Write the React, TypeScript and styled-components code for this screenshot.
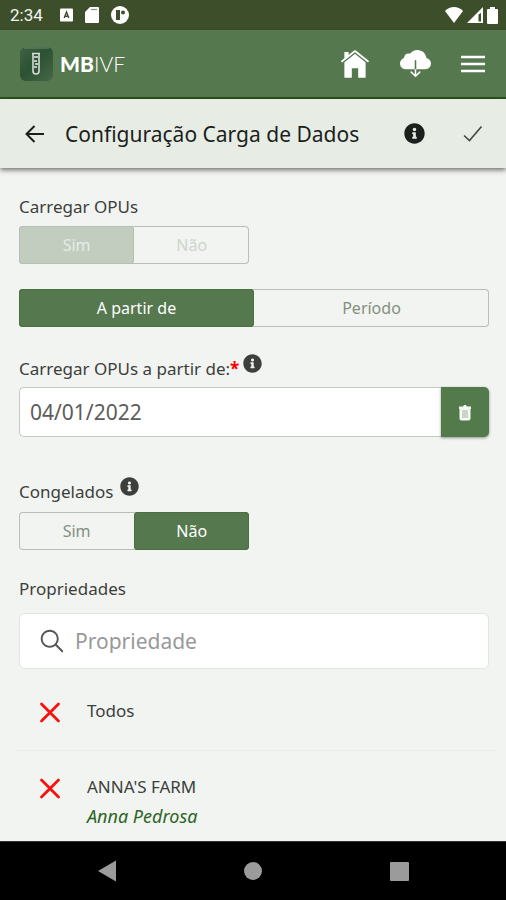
import React, { useState } from "react";
import styled, { createGlobalStyle, css } from "styled-components";
import { IoIosHome, IoIosCloudDownload, IoIosSearch } from "react-icons/io";
import { FaInfoCircle } from "react-icons/fa";

const colors = {
  green: "#55784f",
  greenDark: "#2c5416",
  status: "#3d4f2a",
  bar: "#e7ede4",
  page: "#f2f4f1",
  border: "#b9beb8",
  text: "#3c3f3c",
};

const GlobalStyle = createGlobalStyle`
  *, *::before, *::after { box-sizing: border-box; }
  body {
    margin: 0;
    background: ${colors.page};
    color: ${colors.text};
    font-family: "Noto Sans", "Open Sans", sans-serif;
    font-size: 17px;
    line-height: 24px;
  }
  button, input { font: inherit; color: inherit; }
  button { margin: 0; padding: 0; border: 0; background: none; cursor: pointer; }
  svg { display: block; flex: none; }
`;

const Screen = styled.div`
  display: flex;
  flex-direction: column;
  height: 100vh;
`;

const StatusBar = styled.div`
  display: flex;
  align-items: center;
  flex: none;
  height: 30px;
  padding: 0 8px 0 10px;
  background: ${colors.status};
  color: #f4f6f2;
  font-family: Roboto, sans-serif;
  font-size: 17px;
`;

const StatusIcons = styled.div<{ $end?: boolean }>`
  display: flex;
  align-items: center;
  gap: ${(p) => (p.$end ? 4 : 12)}px;
  margin-left: ${(p) => (p.$end ? "auto" : "17px")};
`;

const Header = styled.header`
  display: flex;
  align-items: center;
  flex: none;
  height: 69px;
  padding: 0 19px 0 20px;
  background: ${colors.green};
  border-bottom: 2px solid ${colors.greenDark};
  color: #fff;
`;

const Brand = styled.div`
  display: flex;
  align-items: center;
  gap: 7px;
  font-family: Lato, sans-serif;
  font-size: 21px;
  font-weight: 300;

  strong { font-weight: 900; }
`;

const HeaderActions = styled.div`
  display: flex;
  align-items: center;
  gap: 28px;
  margin-left: auto;
`;

const IconButton = styled.button`
  display: grid;
  place-items: center;
`;

const TitleBar = styled.div`
  display: flex;
  align-items: center;
  flex: none;
  height: 69px;
  padding: 0 23px 0 24px;
  background: ${colors.bar};
  color: #1c1f1c;
  box-shadow: 0 2px 5px rgba(0, 0, 0, 0.55);
  z-index: 1;
`;

const Title = styled.h1`
  flex: 1;
  margin: 0 0 0 19px;
  font-size: 21px;
  font-weight: 400;
  line-height: 30px;
`;

const TitleActions = styled.div`
  display: flex;
  align-items: center;
  gap: 38px;
`;

const Content = styled.main`
  flex: 1;
  min-height: 0;
  overflow: hidden;
  padding: 27px 17px 0 19px;
`;

const Field = styled.section<{ $after?: number }>`
  display: flex;
  flex-direction: column;
  margin-bottom: ${(p) => p.$after ?? 0}px;
`;

const LabelRow = styled.div<{ $gap?: number; $after: number }>`
  display: flex;
  align-items: flex-start;
  gap: ${(p) => p.$gap ?? 0}px;
  height: 24px;
  margin-bottom: ${(p) => p.$after}px;
`;

const Required = styled.span`
  color: #f00;
  font-weight: 700;
`;

const InfoButton = styled(IconButton)`
  margin-top: -3px;
`;

const Segments = styled.div<{ $half?: boolean }>`
  display: flex;
  width: ${(p) => (p.$half ? "49%" : "100%")};
  height: 38px;
  border-radius: 4px;
  box-shadow: inset 0 0 0 1px ${colors.border};

  & + & { margin-top: 25px; }
`;

const Segment = styled.button<{ $active: boolean }>`
  flex: 1;
  border-radius: 4px;
  font-size: 16px;
  color: #82907f;

  ${(p) =>
    p.$active &&
    css`
      background: ${colors.green};
      color: #fff;
      box-shadow: inset 0 0 0 1px #48703f;
    `}

  &:disabled {
    cursor: default;
    color: ${(p) => (p.$active ? "#e6ece5" : "#cdd4cc")};
    ${(p) =>
      p.$active &&
      css`
        background: #c2cdc0;
        box-shadow: inset 0 0 0 1px #b4c0b2;
      `}
  }
`;

const DateGroup = styled.div`
  display: flex;
  height: 50px;
  border-radius: 5px;
`;

const DateInput = styled.input`
  flex: 1;
  min-width: 0;
  padding: 0 10px;
  border: 1px solid #c4c7c3;
  border-right: 0;
  border-radius: 5px 0 0 5px;
  background: #fff;
  color: #5c5c5c;
  font-size: 21px;
  outline: none;
`;

const ClearButton = styled(IconButton)`
  width: 48px;
  border-radius: 0 5px 5px 0;
  background: #527a4b;
  box-shadow: 0 1px 3px rgba(0, 0, 0, 0.4);
`;

const SearchBox = styled.label`
  display: flex;
  align-items: center;
  gap: 8px;
  height: 56px;
  padding: 0 17px;
  border: 1px solid #e2e4e1;
  border-radius: 6px;
  background: #fff;
  color: #555;
`;

const SearchInput = styled.input`
  flex: 1;
  min-width: 0;
  padding: 0;
  border: 0;
  outline: none;
  background: none;
  font-size: 21px;

  &::placeholder { color: #999; opacity: 1; }
`;

const List = styled.ul`
  margin: 6px -8px 0 -4px;
  padding: 0;
  list-style: none;
`;

const Item = styled.li`
  border-bottom: 1px solid #ebedea;
`;

const ItemButton = styled.button`
  display: flex;
  gap: 25px;
  width: 100%;
  padding: 24px 23px 25px;
  text-align: left;
`;

const ItemText = styled.span`
  display: flex;
  flex-direction: column;
  gap: 5px;

  em {
    color: #2c6424;
    font-size: 18px;
  }
`;

const NavBar = styled.nav`
  display: flex;
  align-items: center;
  justify-content: space-around;
  flex: none;
  height: 59px;
  padding: 0 34px;
  border-top: 1px solid #333;
  background: #000;
`;

const NavButton = styled(IconButton)`
  width: 48px;
  height: 48px;
`;

const Info = ({ size }: { size: number }) => <FaInfoCircle size={size} />;

const LogoIcon = () => (
  <svg width="33" height="34" viewBox="0 0 33 34">
    <defs>
      <linearGradient id="tile" x1="0" y1="0" x2="1" y2="1">
        <stop offset="0" stopColor="#416344" />
        <stop offset="0.45" stopColor="#2c5133" />
        <stop offset="1" stopColor="#456846" />
      </linearGradient>
    </defs>
    <rect width="33" height="34" rx="6" fill="url(#tile)" />
    <path d="M4 1h25" stroke="#6f8d6c" strokeWidth="1" />
    <path d="M12 6.500h8M13 7v17a3 3 0 0 0 6 0V7" fill="#31523a" stroke="#d5ddd3" strokeWidth="1.600" />
    <path d="M14 10h4M14 14h3M15 17h3M14 20h3" stroke="#e5ebe3" strokeWidth="1.300" />
  </svg>
);

const AppBadgeIcon = () => (
  <svg width="13" height="14" viewBox="0 0 13 14">
    <rect y="0.500" width="13" height="13" rx="1" fill="#fff" />
    <path d="M4.200 10 6.500 4 8.800 10M5 8.200h3" fill="none" stroke={colors.status} strokeWidth="1.400" />
  </svg>
);

const SdCardIcon = () => (
  <svg width="14" height="16" viewBox="0 0 14 16">
    <path d="M5 0h8a1 1 0 0 1 1 1v14a1 1 0 0 1-1 1H1a1 1 0 0 1-1-1V5z" fill="#fff" />
    <path d="M6 2.500h6" stroke="#8b9581" strokeWidth="1.200" />
  </svg>
);

const CircleBadgeIcon = () => (
  <svg width="18" height="18" viewBox="0 0 18 18">
    <circle cx="9" cy="9" r="9" fill="#fff" />
    <rect x="5" y="4" width="4" height="10" fill={colors.status} />
    <circle cx="12" cy="6.500" r="2" fill={colors.status} />
  </svg>
);

const WifiIcon = () => (
  <svg width="18" height="16" viewBox="0 0 18 16">
    <path d="M0 4C5-1.300 13-1.300 18 4L9 16z" fill="#fff" />
  </svg>
);

const SignalIcon = () => (
  <svg width="16" height="16" viewBox="0 0 16 16">
    <path d="M0 16 16 0v16z" fill="#fff" />
    <path d="M11.500 7.500v7h2.500V6" fill={colors.status} />
  </svg>
);

const BatteryIcon = () => (
  <svg width="11" height="17" viewBox="0 0 11 17">
    <path d="M3 0h5v2h2a1 1 0 0 1 1 1v13a1 1 0 0 1-1 1H1a1 1 0 0 1-1-1V3a1 1 0 0 1 1-1h2z" fill="#fff" />
  </svg>
);

const MenuIcon = () => (
  <svg width="28" height="18" viewBox="0 0 28 18">
    <path d="M2 2h24M2 9h24M2 16h24" stroke="#fff" strokeWidth="2.600" />
  </svg>
);

const BackIcon = () => (
  <svg width="22" height="20" viewBox="0 0 22 20" fill="none" stroke="currentColor" strokeWidth="2">
    <path d="M20 10H3M10.500 2 2.500 10l8 8" />
  </svg>
);

const CheckIcon = () => (
  <svg width="20" height="18" viewBox="0 0 20 18" fill="none" stroke="#444844" strokeWidth="1.600">
    <path d="M1 10.500 6.500 15.500 18.500 1.500" />
  </svg>
);

const TrashIcon = () => (
  <svg width="14" height="17" viewBox="0 0 14 17">
    <path d="M1 2.500h4l1-1.500h2l1 1.500h4V5H1z" fill="#f5f8f4" />
    <path d="M1.500 5h11v9.500a2 2 0 0 1-2 2h-7a2 2 0 0 1-2-2z" fill="#f5f8f4" />
    <path d="M5 6v8M7 6v8M9 6v8" stroke="#9db399" strokeWidth="1" />
  </svg>
);

const CrossIcon = () => (
  <svg width="24" height="26" viewBox="0 0 24 26">
    <path d="M3.500 5l17 17M20.500 5l-17 17" stroke="#fb1010" strokeWidth="2.800" strokeLinecap="round" />
  </svg>
);

type SegmentedProps = {
  label: string;
  options: string[];
  initial: number;
  half?: boolean;
  disabled?: boolean;
};

function Segmented({ label, options, initial, half, disabled }: SegmentedProps) {
  const [selected, setSelected] = useState(initial);
  return (
    <Segments role="group" aria-label={label} $half={half}>
      {options.map((option, i) => (
        <Segment
          key={option}
          type="button"
          $active={i === selected}
          aria-pressed={i === selected}
          disabled={disabled}
          onClick={() => setSelected(i)}
        >
          {option}
        </Segment>
      ))}
    </Segments>
  );
}

const farms = [{ name: "Todos" }, { name: "ANNA'S FARM", owner: "Anna Pedrosa" }];

export default function App() {
  const [date, setDate] = useState("04/01/2022");
  const [query, setQuery] = useState("");

  return (
    <>
      <GlobalStyle />
      <Screen>
        <StatusBar>
          <span>2:34</span>
          <StatusIcons>
            <AppBadgeIcon />
            <SdCardIcon />
            <CircleBadgeIcon />
          </StatusIcons>
          <StatusIcons $end>
            <WifiIcon />
            <SignalIcon />
            <BatteryIcon />
          </StatusIcons>
        </StatusBar>

        <Header>
          <Brand>
            <LogoIcon />
            <span><strong>MB</strong>IVF</span>
          </Brand>
          <HeaderActions>
            <IconButton aria-label="Início"><IoIosHome size={34} /></IconButton>
            <IconButton aria-label="Baixar"><IoIosCloudDownload size={31} /></IconButton>
            <IconButton aria-label="Menu"><MenuIcon /></IconButton>
          </HeaderActions>
        </Header>

        <TitleBar>
          <IconButton aria-label="Voltar"><BackIcon /></IconButton>
          <Title>Configuração Carga de Dados</Title>
          <TitleActions>
            <IconButton aria-label="Informações"><Info size={21} /></IconButton>
            <IconButton aria-label="Confirmar"><CheckIcon /></IconButton>
          </TitleActions>
        </TitleBar>

        <Content>
          <Field $after={30}>
            <LabelRow $after={7}>Carregar OPUs</LabelRow>
            <Segmented label="Carregar OPUs" options={["Sim", "Não"]} initial={0} half disabled />
            <Segmented label="Intervalo" options={["A partir de", "Período"]} initial={0} />
          </Field>

          <Field $after={43}>
            <LabelRow $gap={4} $after={6}>
              <label htmlFor="date">Carregar OPUs a partir de:<Required>*</Required></label>
              <InfoButton aria-label="Sobre a data"><Info size={19} /></InfoButton>
            </LabelRow>
            <DateGroup>
              <DateInput id="date" value={date} onChange={(e) => setDate(e.target.value)} />
              <ClearButton aria-label="Limpar data" onClick={() => setDate("")}><TrashIcon /></ClearButton>
            </DateGroup>
          </Field>

          <Field $after={27}>
            <LabelRow $gap={7} $after={8}>
              <span>Congelados</span>
              <InfoButton aria-label="Sobre congelados"><Info size={19} /></InfoButton>
            </LabelRow>
            <Segmented label="Congelados" options={["Sim", "Não"]} initial={1} half />
          </Field>

          <Field>
            <LabelRow $after={12}><label htmlFor="farm">Propriedades</label></LabelRow>
            <SearchBox>
              <IoIosSearch size={30} />
              <SearchInput
                id="farm"
                placeholder="Propriedade"
                value={query}
                onChange={(e) => setQuery(e.target.value)}
              />
            </SearchBox>
            <List>
              {farms.map((farm) => (
                <Item key={farm.name}>
                  <ItemButton type="button">
                    <CrossIcon />
                    <ItemText>
                      <span>{farm.name}</span>
                      {farm.owner && <em>{farm.owner}</em>}
                    </ItemText>
                  </ItemButton>
                </Item>
              ))}
            </List>
          </Field>
        </Content>

        <NavBar aria-label="Sistema">
          <NavButton aria-label="Voltar à tela anterior">
            <svg width="18" height="22" viewBox="0 0 18 22"><path d="M0 11 18 0.500v21z" fill="#9b9b9b" /></svg>
          </NavButton>
          <NavButton aria-label="Tela inicial">
            <svg width="18" height="20" viewBox="0 0 18 20"><circle cx="9" cy="10" r="9" fill="#9b9b9b" /></svg>
          </NavButton>
          <NavButton aria-label="Aplicativos recentes">
            <svg width="19" height="19" viewBox="0 0 19 19"><rect width="19" height="19" rx="1" fill="#9b9b9b" /></svg>
          </NavButton>
        </NavBar>
      </Screen>
    </>
  );
}
